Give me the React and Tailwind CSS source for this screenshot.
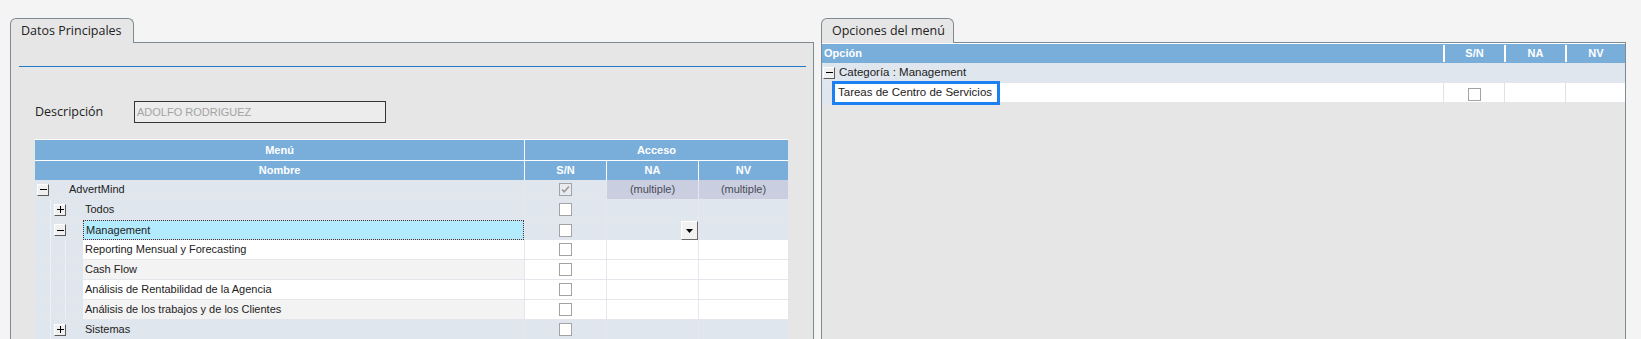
import React from 'react';

const tbl = { fontFamily: '"Liberation Sans", Arial, sans-serif' };
const ui = { fontFamily: '"Open Sans", "Noto Sans", sans-serif' };

function Expander({ sign }) {
  return (
    <span className="inline-flex w-[12px] h-[12px] items-center justify-center bg-[#f0f0f0] border border-t-white border-l-white border-b-[#5a5a5a] border-r-[#5a5a5a]">
      {sign === '+' ? (
        <svg width="7" height="7" viewBox="0 0 7 7"><path d="M0 3h7v1H0zM3 0h1v7H3z" fill="#000" /></svg>
      ) : (
        <svg width="7" height="7" viewBox="0 0 7 7"><path d="M0 3h7v1H0z" fill="#000" /></svg>
      )}
    </span>
  );
}

function Check({ checked }) {
  return (
    <span className={`inline-flex w-[13px] h-[13px] items-center justify-center border border-[#a3a3a3] ${checked ? 'bg-[#e8ebef]' : 'bg-white'}`}>
      {checked && (
        <svg width="9" height="9" viewBox="0 0 9 9"><path d="M1 4.5l2.2 2.3L8 1.5" stroke="#9a9a9a" strokeWidth="1.6" fill="none" /></svg>
      )}
    </span>
  );
}

function Row({ level, label, sign, bg, selected, multiple, dropdown }) {
  const cellBg = level === 2 ? 'bg-white' : 'bg-[#dfe6ee]';
  return (
    <div className="grid grid-cols-[489px_82px_92px_90px] h-[20px] border-b border-[#e3e6ea] text-[11px] text-[#222]">
      <div className="flex h-full">
        {level === 0 && (
          <>
            <div className="w-[33px] pl-[2px] flex items-center bg-[#dfe6ee]"><Expander sign={sign} /></div>
            <div className="flex-1 flex items-center pl-[1px] bg-[#dfe6ee]">{label}</div>
          </>
        )}
        {level === 1 && (
          <>
            <div className="w-[15px] bg-[#dfe6ee]" />
            <div className="w-[33px] pl-[3px] flex items-center bg-[#dfe6ee] border-l border-[#eef2f6]"><Expander sign={sign} /></div>
            <div className={`flex-1 flex items-center pl-[2px] ${selected ? 'bg-[#b2ebfd] border border-dotted border-[#5a2a2a]' : 'bg-[#dfe6ee]'}`}>{label}</div>
          </>
        )}
        {level === 2 && (
          <>
            <div className="w-[15px] bg-[#dfe6ee]" />
            <div className="w-[16px] bg-[#dfe6ee] border-l border-r border-[#eef2f6]" />
            <div className="w-[17px] bg-[#dfe6ee]" />
            <div className={`flex-1 flex items-center pl-[2px] ${bg}`}>{label}</div>
          </>
        )}
      </div>
      <div className={`flex items-center justify-center border-l border-[#e6e8eb] ${cellBg}`}>
        <Check checked={multiple} />
      </div>
      {multiple ? (
        <div className="flex items-center justify-center border-l border-[#e6e8eb] bg-[#c9cfe1]">
          <span className="text-[#4a4a55]">(multiple)</span>
        </div>
      ) : (
        <div className={`flex items-center justify-end border-l border-[#e6e8eb] ${cellBg}`}>
          {dropdown && (
            <span className="w-[17px] h-[19px] mt-[1px] flex items-center justify-center bg-[#f2f2f2] border border-t-white border-l-white border-b-[#6a6a6a] border-r-[#6a6a6a]">
              <svg width="7" height="4" viewBox="0 0 7 4"><path d="M0 0h7L3.5 4z" fill="#000" /></svg>
            </span>
          )}
        </div>
      )}
      <div className={`flex items-center justify-center border-l border-[#e6e8eb] ${multiple ? 'bg-[#c9cfe1]' : cellBg}`}>
        {multiple && <span className="text-[#4a4a55]">(multiple)</span>}
      </div>
    </div>
  );
}

function Tab({ label, width }) {
  return (
    <div className="flex">
      <div
        className={`${width} h-[25px] -mb-px relative z-10 border border-b-0 border-[#7f8b94] rounded-t-[6px] bg-[#e6e6e6] pl-[10px] flex items-center text-[12.5px] text-[#222]`}
        style={ui}
      >
        {label}
      </div>
    </div>
  );
}

export default function App() {
  const rows = [
    { level: 0, label: 'AdvertMind', sign: '-', multiple: true },
    { level: 1, label: 'Todos', sign: '+' },
    { level: 1, label: 'Management', sign: '-', selected: true, dropdown: true },
    { level: 2, label: 'Reporting Mensual y Forecasting', bg: 'bg-white' },
    { level: 2, label: 'Cash Flow', bg: 'bg-[#f3f3f3]' },
    { level: 2, label: 'Análisis de Rentabilidad de la Agencia', bg: 'bg-white' },
    { level: 2, label: 'Análisis de los trabajos y de los Clientes', bg: 'bg-[#f3f3f3]' },
    { level: 1, label: 'Sistemas', sign: '+' },
  ];

  return (
    <div className="w-[1641px] h-[339px] overflow-hidden bg-[#f4f4f4] flex gap-[7px] pt-[18px] pl-[10px]">
      {/* Datos Principales */}
      <div className="w-[804px] flex flex-col">
        <Tab label="Datos Principales" width="w-[124px]" />
        <div className="flex-1 bg-[#e6e6e6] border border-b-0 border-[#7f8b94]">
          <div className="mt-[23px] ml-[8px] mr-[7px] h-px bg-[#1f7bc9]" />
          <div className="mt-[34px] pl-[24px] flex items-center">
            <span className="w-[99px] text-[12.5px] text-[#222]" style={ui}>Descripción</span>
            <div className="w-[252px] h-[22px] border border-[#333] bg-[#ececec] flex items-center pl-[2px] text-[11px] text-[#a3a3a3]" style={tbl}>
              ADOLFO RODRIGUEZ
            </div>
          </div>
          <div className="mt-[16px] ml-[24px] w-[753px]" style={tbl}>
            <div className="grid grid-cols-[489px_264px] h-[21px] border-t border-white text-white text-[11px] font-bold">
              <div className="bg-[#79aedb] flex items-center justify-center">Menú</div>
              <div className="bg-[#79aedb] border-l border-white flex items-center justify-center">Acceso</div>
            </div>
            <div className="grid grid-cols-[489px_82px_92px_90px] h-[20px] border-t border-white text-white text-[11px] font-bold">
              <div className="bg-[#79aedb] flex items-center justify-center">Nombre</div>
              <div className="bg-[#79aedb] border-l border-white flex items-center justify-center">S/N</div>
              <div className="bg-[#79aedb] border-l border-white flex items-center justify-center">NA</div>
              <div className="bg-[#79aedb] border-l border-white flex items-center justify-center">NV</div>
            </div>
            {rows.map((r, i) => (
              <Row key={i} {...r} />
            ))}
          </div>
        </div>
      </div>

      {/* Opciones del menú */}
      <div className="w-[805px] flex flex-col">
        <Tab label="Opciones del menú" width="w-[133px]" />
        <div className="flex-1 bg-[#e6e6e6] border border-b-0 border-[#7f8b94]" style={tbl}>
          <div className="grid grid-cols-[621px_61px_61px_60px] h-[20px] border-t border-white bg-[#79aedb] text-white text-[11px] font-bold">
            <div className="flex items-center pl-[2px]">Opción</div>
            <div className="flex items-center justify-center border-l-2 border-white my-[1px]">S/N</div>
            <div className="flex items-center justify-center border-l-2 border-white my-[1px]">NA</div>
            <div className="flex items-center justify-center border-l-2 border-white my-[1px]">NV</div>
          </div>
          <div className="h-[20px] bg-[#dfe6ee] border-b border-[#e3e6ea] flex items-center pl-[1px] gap-[4px] text-[11.5px] text-[#222]">
            <Expander sign="-" />
            <span>Categoría : Management</span>
          </div>
          <div className="grid grid-cols-[621px_61px_61px_60px] h-[20px] bg-white border-b border-[#e3e6ea] text-[11.5px] text-[#222]">
            <div className="flex h-full">
              <div className="w-[10px] bg-[#dfe6ee]" />
              <div className="relative z-10 -mt-[2px] h-[24px] w-[168px] border-[3px] border-[#1b80f2] bg-white flex items-center pl-[3px]">
                Tareas de Centro de Servicios
              </div>
            </div>
            <div className="flex items-center justify-center border-l border-[#e2e2e2]"><Check /></div>
            <div className="border-l border-[#e2e2e2]" />
            <div className="border-l border-[#e2e2e2]" />
          </div>
        </div>
      </div>
    </div>
  );
}
